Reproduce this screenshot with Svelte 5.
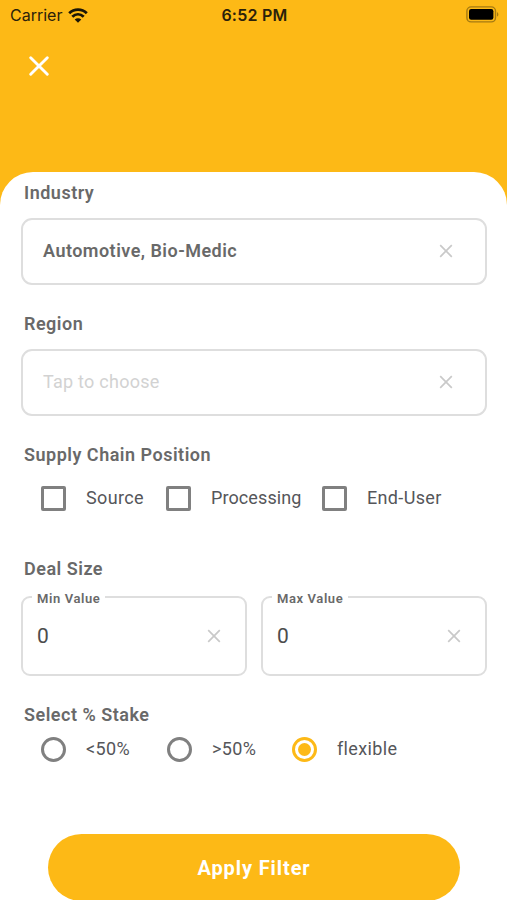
<script>
	let industry = $state('Automotive, Bio-Medic');
	let region = $state('');
	let positions = $state([
		{ name: 'Source', checked: false },
		{ name: 'Processing', checked: false },
		{ name: 'End-User', checked: false }
	]);
	let amounts = $state([
		{ label: 'Min Value', value: '0' },
		{ label: 'Max Value', value: '0' }
	]);
	const stakes = ['<50%', '>50%', 'flexible'];
	let stake = $state('flexible');
</script>

{#snippet cross()}
	<svg class="cross" viewBox="0 0 14 14" aria-hidden="true">
		<path d="M1.2 1.2 12.8 12.8M12.8 1.2 1.2 12.8" />
	</svg>
{/snippet}

<div class="screen">
	<header>
		<div class="status_bar">
			<div class="carrier">
				<span>Carrier</span>
				<svg class="wifi" viewBox="0 0 20 15" aria-hidden="true">
					<path d="M1.2 5.2C6.2.4 13.8.4 18.8 5.2" />
					<path d="M4.3 8.7C7.7 5.5 12.3 5.5 15.7 8.7" />
					<path class="dot" d="M10 14.8 6.7 11.6C8.6 9.9 11.4 9.9 13.3 11.6Z" />
				</svg>
			</div>
			<span class="time">6:52 PM</span>
			<svg class="battery" viewBox="0 0 33 17" aria-hidden="true">
				<rect class="shell" x="0.9" y="0.9" width="28.6" height="15" rx="4.2" />
				<rect x="3" y="3" width="24.4" height="10.8" rx="2.2" />
				<path class="tip" d="M31 6.2C32.8 6.8 32.8 10 31 10.6Z" />
			</svg>
		</div>
		<button type="button" class="close" aria-label="Close">{@render cross()}</button>
	</header>

	<main>
		<h2>Industry</h2>
		<div class="field">
			<span class="value">{industry}</span>
			<button type="button" class="clear" aria-label="Clear industry" onclick={() => (industry = '')}>
				{@render cross()}
			</button>
		</div>

		<h2 class="region">Region</h2>
		<div class="field">
			{#if region}
				<span class="value">{region}</span>
			{:else}
				<span class="placeholder">Tap to choose</span>
			{/if}
			<button type="button" class="clear" aria-label="Clear region" onclick={() => (region = '')}>
				{@render cross()}
			</button>
		</div>

		<h2 class="supply">Supply Chain Position</h2>
		<div class="options positions">
			{#each positions as position}
				<label>
					<input type="checkbox" bind:checked={position.checked} />
					<span>{position.name}</span>
				</label>
			{/each}
		</div>

		<h2 class="deal">Deal Size</h2>
		<div class="amounts">
			{#each amounts as amount}
				<fieldset>
					<legend>{amount.label}</legend>
					<div class="amount">
						<span>{amount.value}</span>
						<button type="button" class="clear" aria-label="Clear {amount.label}" onclick={() => (amount.value = '')}>
							{@render cross()}
						</button>
					</div>
				</fieldset>
			{/each}
		</div>

		<h2 class="stake">Select % Stake</h2>
		<div class="options stakes">
			{#each stakes as name}
				<label>
					<input type="radio" value={name} bind:group={stake} />
					<span>{name}</span>
				</label>
			{/each}
		</div>

		<button type="button" class="apply">Apply Filter</button>
	</main>
</div>

<style>
	:global(body) {
		background: #fff;
	}

	.screen {
		height: 900px;
		overflow: hidden;
		display: flex;
		flex-direction: column;
		background: #fdb916;
		font-family: Roboto, 'Open Sans', sans-serif;
		color: #696969;
	}

	button {
		padding: 0;
		border: 0;
		background: none;
		font-family: inherit;
	}

	header {
		height: 172px;
		flex: none;
	}

	.status_bar {
		height: 30px;
		padding: 0 8px 0 10px;
		display: grid;
		grid-template-columns: 1fr auto 1fr;
		align-items: center;
		box-sizing: border-box;
		font-family: Inter, sans-serif;
		font-size: 16px;
		color: #2b210a;
	}

	.carrier {
		display: flex;
		align-items: center;
		gap: 6px;
	}

	.wifi {
		width: 20px;
		height: 15px;
		fill: none;
		stroke: #191507;
		stroke-width: 2.8;
	}

	.wifi .dot {
		fill: #191507;
		stroke: none;
	}

	.time {
		font-weight: 600;
		letter-spacing: 0.25px;
	}

	.battery {
		justify-self: end;
		width: 33px;
		height: 17px;
		margin-top: -2px;
		fill: #000;
	}

	.battery .shell {
		fill: none;
		stroke: #a57a12;
		stroke-width: 1.4;
	}

	.battery .tip {
		fill: #a57a12;
	}

	.cross {
		display: block;
		width: 100%;
		height: 100%;
		fill: none;
		stroke: currentColor;
		stroke-width: 1.7;
	}

	.close {
		display: block;
		width: 20px;
		height: 20px;
		margin: 26px 0 0 29px;
		color: #fff;
	}

	.close :global(.cross) {
		stroke-width: 2;
		stroke-linecap: round;
	}

	main {
		flex: 1;
		display: flex;
		flex-direction: column;
		padding: 9px 20px 0 21px;
		border-radius: 33px 33px 0 0;
		background: #fff;
	}

	h2 {
		margin: 0 0 13px 3px;
		font-size: 18px;
		line-height: 24px;
		font-weight: 600;
		letter-spacing: 0.5px;
	}

	.field {
		height: 67px;
		flex: none;
		box-sizing: border-box;
		padding: 0 32px 2px 20px;
		display: flex;
		align-items: center;
		justify-content: space-between;
		border: 2px solid #dedede;
		border-radius: 11px;
		font-size: 18px;
	}

	.value {
		font-weight: 600;
		letter-spacing: 0.47px;
	}

	.placeholder {
		color: #d2d2d2;
		letter-spacing: 0.25px;
	}

	.clear {
		flex: none;
		width: 14px;
		height: 14px;
		color: #c9c9c9;
	}

	.region,
	.supply {
		margin-top: 27px;
	}

	.supply {
		margin-bottom: 19px;
	}

	.options {
		display: grid;
		margin-left: 20px;
		font-size: 18px;
		line-height: 24px;
		letter-spacing: 0.35px;
		color: #55565a;
	}

	.positions {
		grid-template-columns: 125px 156px auto;
	}

	.positions label:nth-child(2) {
		letter-spacing: 0.1px;
	}

	.stakes {
		grid-template-columns: 126px 125px auto;
	}

	label {
		display: flex;
		align-items: center;
		gap: 20px;
		height: 25px;
		white-space: nowrap;
	}

	label span {
		margin-top: -2px;
	}

	input {
		appearance: none;
		flex: none;
		box-sizing: border-box;
		width: 25px;
		height: 25px;
		margin: 0;
		border: 3px solid #808080;
		border-radius: 2px;
	}

	input[type='radio'] {
		border-radius: 50%;
	}

	input:checked {
		border-color: #fdb916;
		background: #fdb916;
		background-clip: content-box;
		padding: 3px;
	}

	.deal {
		margin-top: 46px;
		margin-bottom: 10px;
	}

	.amounts {
		display: grid;
		grid-template-columns: 1fr 1fr;
		gap: 14px;
	}

	fieldset {
		min-width: 0;
		height: 85px;
		box-sizing: border-box;
		margin: 0;
		padding: 0 24px 0 9px;
		border: 2px solid #dedede;
		border-radius: 9px;
	}

	/* shorter than its line, so the border runs just above the text's middle */
	legend {
		height: 12px;
		padding: 0 5px;
		font-size: 13px;
		line-height: 16px;
		font-weight: 600;
		letter-spacing: 0.6px;
	}

	.amount {
		display: flex;
		align-items: center;
		justify-content: space-between;
		height: 65px;
		padding-left: 5px;
		font-size: 21px;
		color: #4c4c4c;
	}

	.stake {
		margin-top: 27px;
		margin-bottom: 10px;
	}

	.apply {
		flex: none;
		height: 67px;
		margin: 72px 27px 0;
		border-radius: 34px;
		background: #fdb916;
		color: #fff;
		font-size: 20px;
		font-weight: 700;
		letter-spacing: 0.9px;
	}
</style>
